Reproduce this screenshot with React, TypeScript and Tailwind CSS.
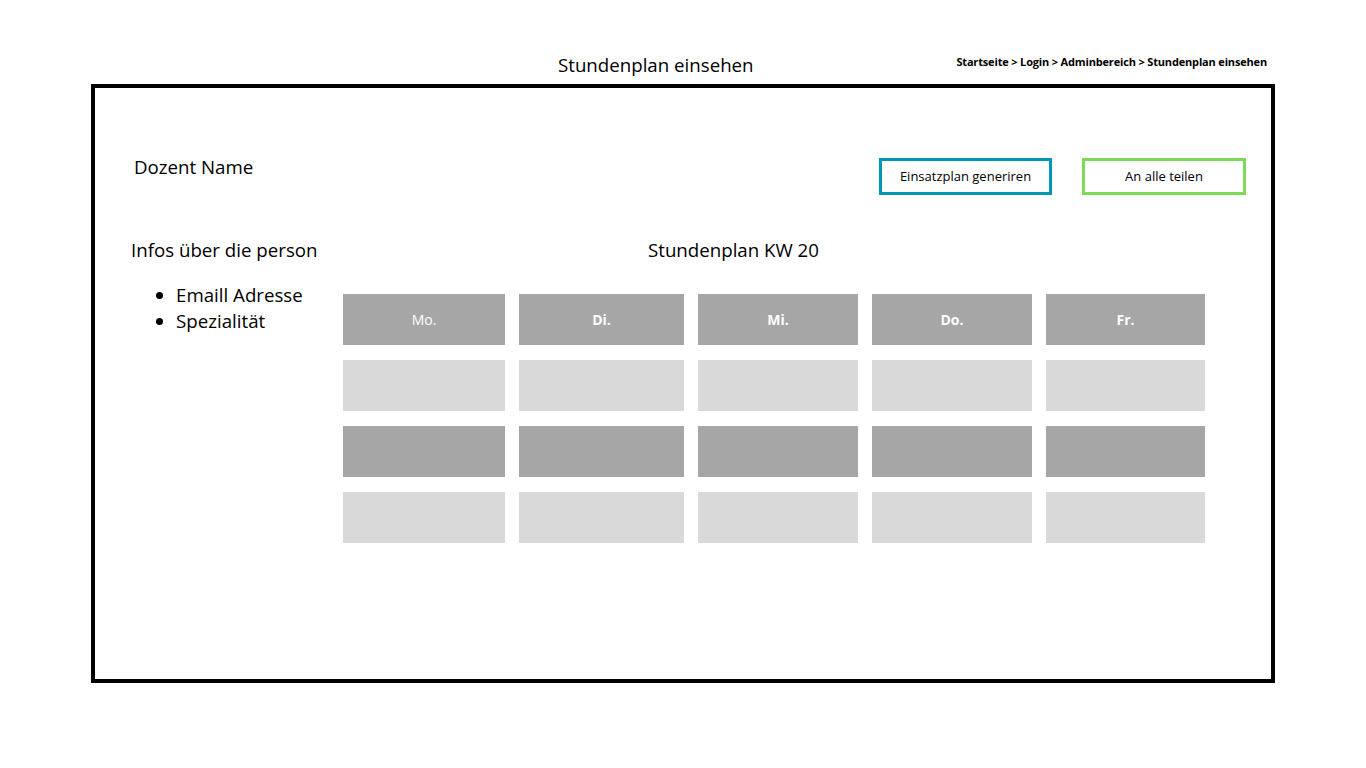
const days = [
  { label: 'Mo.', bold: false },
  { label: 'Di.', bold: true },
  { label: 'Mi.', bold: true },
  { label: 'Do.', bold: true },
  { label: 'Fr.', bold: true },
];

const rows = ['dark', 'light', 'dark', 'light'];

export default function App() {
  return (
    <div className="w-[1366px] h-[768px] bg-white text-black font-['Open_Sans',sans-serif]">
      {/* Header */}
      <div className="flex items-end h-[84px] pb-[6px]">
        <h1 className="ml-[558px] text-[18.7px] leading-[26px]">Stundenplan einsehen</h1>
        <div className="ml-auto mr-[99px] mb-[9px] text-[11px] font-bold tracking-[-0.015em] leading-[14px]">
          Startseite &gt; Login &gt; Adminbereich &gt; Stundenplan einsehen
        </div>
      </div>

      {/* Frame */}
      <div className="ml-[91px] w-[1184px] h-[599px] border-4 border-black">
        <div className="flex items-center pt-[70px] pl-[39px] pr-[25px]">
          <span className="text-[18.7px] leading-[24px] -mt-[20px]">Dozent Name</span>
          <div className="ml-auto flex gap-[30px]">
            <button className="w-[173px] h-[37px] border-[3px] border-[#0097b2] text-[13px] pt-[1px]">
              Einsatzplan generiren
            </button>
            <button className="w-[164px] h-[37px] border-[3px] border-[#7ed957] text-[13px] pt-[1px]">
              An alle teilen
            </button>
          </div>
        </div>

        <div className="flex mt-[43px]">
          <div className="w-[248px] pl-[36px]">
            <p className="text-[18.7px] leading-[24px]">Infos über die person</p>
            <ul className="mt-[20px] ml-[45px] list-disc text-[18.7px] leading-[26px]">
              <li>Emaill Adresse</li>
              <li>Spezialität</li>
            </ul>
          </div>
          <div>
            <p className="ml-[305px] text-[18.7px] leading-[24px]">Stundenplan KW 20</p>
            <div className="mt-[32px] grid grid-cols-[162px_165px_160px_160px_159px] gap-x-[14px] gap-y-[15px]">
              {rows.map((r, ri) =>
                days.map((d, di) => (
                  <div
                    key={`${ri}-${di}`}
                    className={`h-[51px] flex items-center justify-center text-white text-[14px] ${
                      r === 'dark' ? 'bg-[#a6a6a6]' : 'bg-[#d9d9d9]'
                    } ${d.bold ? 'font-bold' : ''}`}
                  >
                    {ri === 0 ? d.label : ''}
                  </div>
                ))
              )}
            </div>
          </div>
        </div>
      </div>
    </div>
  );
}
